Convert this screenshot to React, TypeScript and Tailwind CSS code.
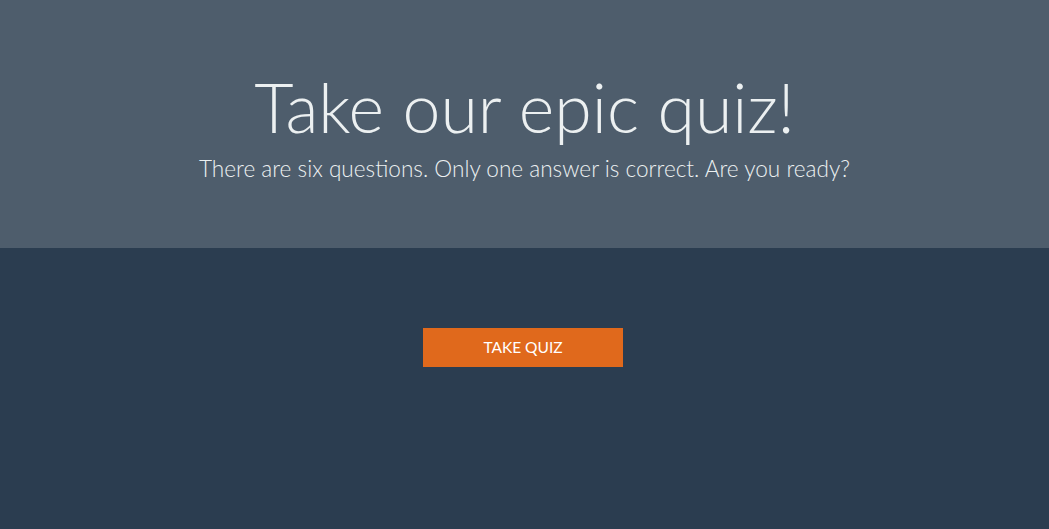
export default function App() {
  return (
    <div className="min-h-[529px] bg-[#2b3d50] font-['Lato',sans-serif] flex flex-col">
      {/* Header */}
      <div className="h-[248px] bg-[#4e5d6c] flex flex-col items-center pt-[67px] text-[#ecf0f1]">
        <h1 className="text-[68px] font-light leading-[80px]">Take our epic quiz!</h1>
        <p className="text-[22.6px] font-light leading-[26px] mt-[9px]">
          There are six questions. Only one answer is correct. Are you ready?
        </p>
      </div>
      {/* Start */}
      <div className="flex justify-center pt-[80px]">
        <button className="w-[200px] h-[39px] mr-[3px] bg-[#e0691c] text-white text-[15.5px] uppercase">
          Take Quiz
        </button>
      </div>
    </div>
  );
}
